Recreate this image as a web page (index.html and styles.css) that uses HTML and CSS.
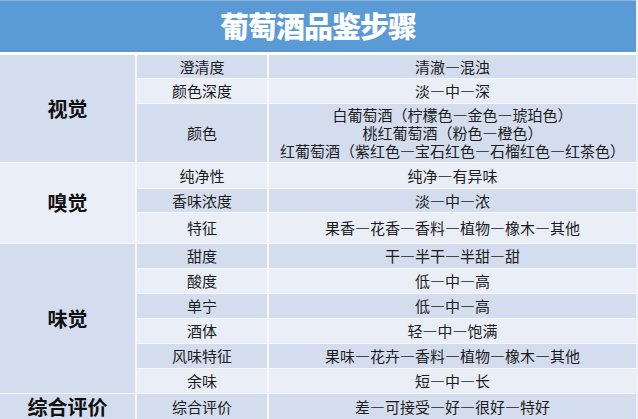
FILE: index.html
```html
<!DOCTYPE html>
<html lang="zh-CN">
<head>
<meta charset="utf-8">
<title>葡萄酒品鉴步骤</title>
<link rel="stylesheet" href="styles.css">
</head>
<body>
<div class="sheet">
  <header class="head"><h1 class="title">葡萄酒品鉴步骤</h1></header>
  <div class="grid">
    <div class="grp dark g3">视觉</div>
    <div class="attr dark">澄清度</div><div class="val dark">清澈—混浊</div>
    <div class="attr light">颜色深度</div><div class="val light">淡—中—深</div>
    <div class="attr dark">颜色</div>
    <div class="val dark multi"><span>白葡萄酒（柠檬色—金色—琥珀色）</span><span>桃红葡萄酒（粉色—橙色）</span><span>红葡萄酒（紫红色—宝石红色—石榴红色—红茶色）</span></div>

    <div class="grp light g3">嗅觉</div>
    <div class="attr light">纯净性</div><div class="val light">纯净—有异味</div>
    <div class="attr dark">香味浓度</div><div class="val dark">淡—中—浓</div>
    <div class="attr light">特征</div><div class="val light">果香—花香—香料—植物—橡木—其他</div>

    <div class="grp dark g6">味觉</div>
    <div class="attr dark">甜度</div><div class="val dark">干—半干—半甜—甜</div>
    <div class="attr light">酸度</div><div class="val light">低—中—高</div>
    <div class="attr dark">单宁</div><div class="val dark">低—中—高</div>
    <div class="attr light">酒体</div><div class="val light">轻—中—饱满</div>
    <div class="attr dark">风味特征</div><div class="val dark">果味—花卉—香料—植物—橡木—其他</div>
    <div class="attr light">余味</div><div class="val light">短—中—长</div>

    <div class="grp dark">综合评价</div>
    <div class="attr dark">综合评价</div><div class="val dark">差—可接受—好—很好—特好</div>
  </div>
</div>
</body>
</html>
```

FILE: styles.css
```css
html, body {
  margin: 0;
  padding: 0;
  background: #ffffff;
}
body {
  font-family: "Noto Sans CJK SC", "Noto Sans", sans-serif;
  color: #1c1c1c;
  overflow: hidden;
}
.sheet {
  width: 636px;
  height: 419px;
  overflow: hidden;
  border-right: 2px solid #eef1f7;
}
.head {
  height: 52px;
  background: #5b9bd5;
  display: flex;
  align-items: center;
  justify-content: center;
  margin-bottom: 3px;
  border-top: 1px solid #8fb3d9;
  box-sizing: border-box;
}
.title {
  margin: 0;
  color: #ffffff;
  font-size: 29px;
  font-weight: 900;
  line-height: 1;
  letter-spacing: -1px;
  padding-bottom: 3px;
}
.grid {
  display: grid;
  grid-template-columns: 135px 130px 1fr;
  grid-template-rows: 23px 24px 58px 25px 23px 30px 24px 24px 24px 24px 24px 24px 26px;
  column-gap: 2px;
  row-gap: 1px;
  background: #f6f8fc;
}
.grid > div {
  display: flex;
  align-items: center;
  justify-content: center;
  text-align: center;
  font-size: 15px;
  line-height: 18px;
  white-space: nowrap;
}
.dark { background: #d3ddee; }
.light { background: #e9eef7; }
.g3 { grid-row: span 3; }
.g6 { grid-row: span 6; }
.grid > .grp {
  font-size: 20px;
  font-weight: 700;
  color: #111111;
}
.grid > .multi {
  flex-direction: column;
}
```
